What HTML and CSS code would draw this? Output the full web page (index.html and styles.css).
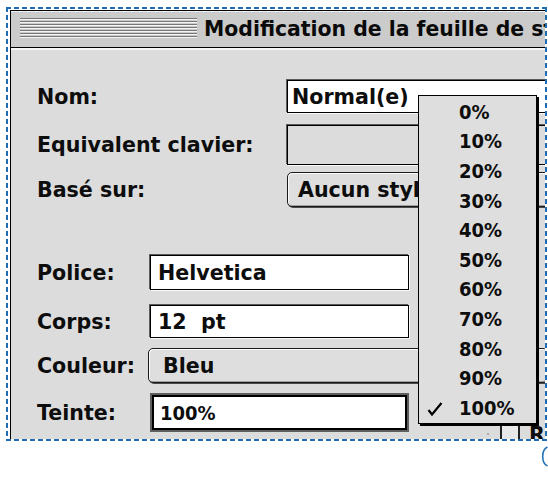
FILE: index.html
```html
<!DOCTYPE html>
<html lang="fr">
<head>
<meta charset="utf-8">
<title>Modification de la feuille de style</title>
<link rel="stylesheet" href="styles.css">
</head>
<body>
<div class="frame">
  <div class="window">
    <div class="titlebar">
      <div class="stripes"></div>
      <div class="title">Modification de la feuille de style</div>
    </div>
    <div class="content">
      <div class="top">
        <div class="row r-nom"><span class="label">Nom:</span><div class="field wide h33">Normal(e)</div></div>
        <div class="row r-eq"><span class="label">Equivalent clavier:</span><div class="field gray wide h40"></div></div>
        <div class="row r-base"><span class="label">Basé sur:</span><div class="popup wide h35 pad-a">Aucun style</div></div>
      </div>
      <div class="bottom">
        <div class="row r-police"><span class="label">Police:</span><div class="field narrow h35">Helvetica</div></div>
        <div class="row r-corps"><span class="label">Corps:</span><div class="field narrow h33">12&nbsp;&nbsp;pt</div></div>
        <div class="row r-couleur"><span class="label">Couleur:</span><div class="popup cwide h35 pad-b">Bleu</div></div>
        <div class="row r-teinte"><span class="label">Teinte:</span><div class="field focus">100%</div><div class="chk"></div><span class="chk-label">R</span></div>
      </div>
    </div>
  </div>
</div>

<div class="menu">
  <div class="item">0%</div>
  <div class="item">10%</div>
  <div class="item">20%</div>
  <div class="item">30%</div>
  <div class="item">40%</div>
  <div class="item">50%</div>
  <div class="item">60%</div>
  <div class="item">70%</div>
  <div class="item">80%</div>
  <div class="item">90%</div>
  <div class="item checked"><svg class="check" width="16" height="16" viewBox="0 0 16 16"><path d="M1.5 9 L5 13.5 L14.5 2" fill="none" stroke="#000" stroke-width="2.2"/></svg><span>100%</span></div>
</div>

<div class="marquee"></div>
<svg class="handle" width="10" height="24" viewBox="0 0 10 24"><path d="M8.5 2 A7 10 0 0 0 8.5 21" fill="none" stroke="#2574b8" stroke-width="1.6"/></svg>
</body>
</html>
```

FILE: styles.css
```css
* { box-sizing: border-box; }

html, body {
  margin: 0;
  background: #ffffff;
}

body {
  width: 548px;
  height: 478px;
  overflow: hidden;
  padding: 9px 0 0 8px;
  font-family: "DejaVu Sans", "Liberation Sans", sans-serif;
  font-weight: bold;
  font-size: 20.6px;
  color: #0d0d0d;
}

.frame {
  width: 537px;
  height: 430px;
  overflow: hidden;
}

.window {
  margin: 1px 0 0 2px;
  width: 580px;
  height: 460px;
  border-left: 1px solid #000;
  border-top: 1px solid #000;
  background: #dcdcdc;
}

.titlebar {
  height: 37px;
  border-bottom: 1px solid #000;
  background: #cbcbcb;
  box-shadow: inset 0 1px 0 #efefef;
  display: flex;
  align-items: center;
  padding-left: 9px;
}

.stripes {
  width: 177px;
  height: 20px;
  margin-top: -2px;
  background: repeating-linear-gradient(180deg, #777 0 1px, #f4f4f4 1px 2px, #cbcbcb 2px 3px);
}

.title {
  margin-left: 7px;
  white-space: nowrap;
  font-size: 20.4px;
  color: #0a0a0a;
}

.content {
  padding: 32px 0 0 26px;
  box-shadow: inset 0 2px 0 #f6f6f6;
}

.row {
  display: flex;
  align-items: center;
}

.top .label { width: 250px; flex: none; }
.bottom .label { width: 113px; flex: none; }

.r-eq { margin-top: 12px; }
.r-base { margin-top: 7px; }
.bottom { margin-top: 48px; }
.r-corps { margin-top: 15px; }
.r-couleur { margin-top: 10px; }
.r-teinte { margin-top: 12px; }

.field {
  flex: none;
  display: flex;
  align-items: center;
  background: #fff;
  border: 1px solid #000;
  box-shadow: -1px -1px 0 #5a5a5a, 1px 1px 0 #fbfbfb;
  white-space: nowrap;
}

.field.gray { background: #dcdcdc; }

.wide { width: 280px; padding-left: 4px; }
.narrow { width: 259px; padding-left: 7px; }
.h33 { height: 33px; }
.h35 { height: 35px; }
.h40 { height: 40px; }

.field.focus {
  width: 255px;
  height: 35px;
  margin-left: 2px;
  border: 2px solid #000;
  box-shadow: 0 0 0 2px #5e5e5e;
  padding-left: 6px;
  font-family: "DejaVu Sans Condensed", "DejaVu Sans", sans-serif;
  font-stretch: condensed;
  font-size: 20px;
}

.popup {
  flex: none;
  display: flex;
  align-items: center;
  white-space: nowrap;
  background: #dedede;
  border: 1px solid #1a1a1a;
  border-radius: 5px;
  box-shadow: inset 1px 1px 0 #fafafa, inset -1px -1px 0 #a0a0a0, 1px 1px 0 #4a4a4a;
}

.pad-a { padding-left: 10px; }
.pad-b { padding-left: 14px; margin-left: -2px; }
.cwide { width: 400px; }

.chk {
  flex: none;
  align-self: flex-end;
  width: 20px;
  height: 20px;
  margin: 0 0 -14px 93px;
  border: 2px solid #222;
  background: #e8e8e8;
  box-shadow: -22px 0 0 -9px #aaa;
}

.chk-label {
  align-self: flex-end;
  margin: 0 0 -17px 9px;
}

.menu {
  position: absolute;
  left: 418px;
  top: 95px;
  width: 119px;
  height: 329px;
  background: #dedede;
  border: 1px solid #000;
  box-shadow: 2px 2px 0 #000;
  padding-top: 1px;
  font-family: "DejaVu Sans Condensed", "DejaVu Sans", sans-serif;
  font-stretch: condensed;
  font-size: 20px;
}

.item {
  height: 29.6px;
  display: flex;
  align-items: center;
  padding-left: 40px;
  white-space: nowrap;
}

.item.checked { padding-left: 8px; }
.item .check { flex: none; margin-right: 16px; margin-top: 2px; }

.marquee {
  position: absolute;
  left: 6px;
  top: 7px;
  width: 541px;
  height: 434px;
  pointer-events: none;
  background:
    repeating-linear-gradient(90deg, #1f6db2 0 5px, transparent 5px 8px) left top / 100% 2px no-repeat,
    repeating-linear-gradient(90deg, #1f6db2 0 5px, transparent 5px 8px) left bottom / 100% 2px no-repeat,
    repeating-linear-gradient(180deg, #1f6db2 0 5px, transparent 5px 8px) left top / 2px 100% no-repeat,
    repeating-linear-gradient(180deg, #1f6db2 0 5px, transparent 5px 8px) right top / 2px 100% no-repeat;
}

.handle {
  position: absolute;
  left: 539px;
  top: 445px;
}
```
